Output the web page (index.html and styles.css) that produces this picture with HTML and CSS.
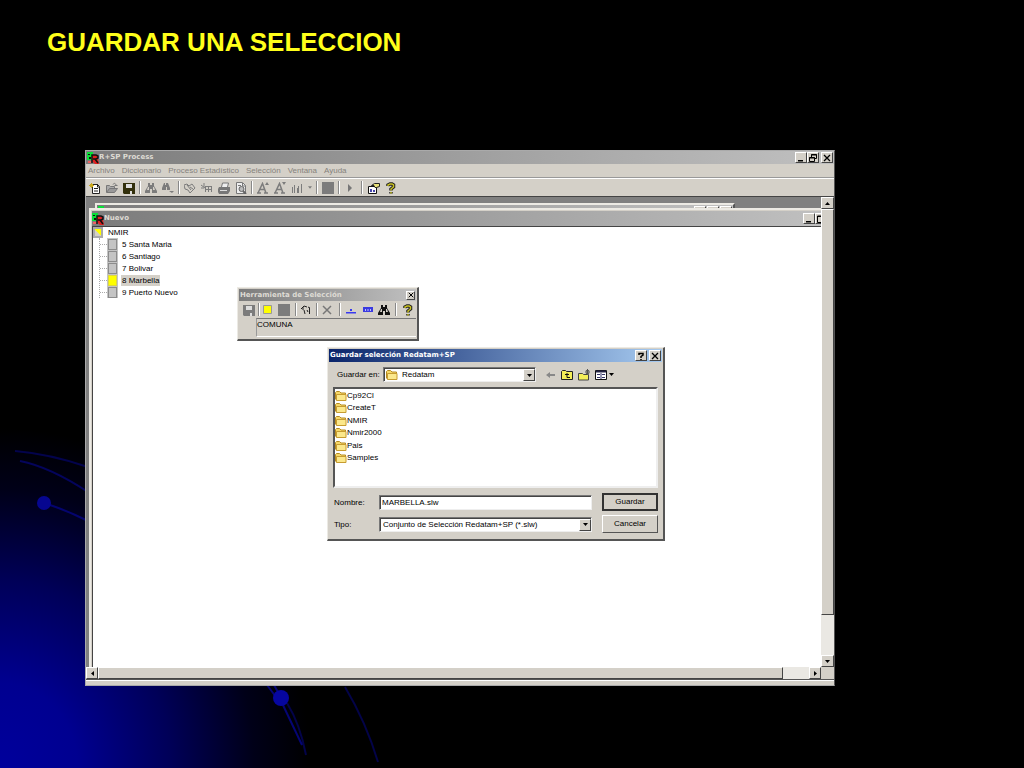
FILE: index.html
```html
<!DOCTYPE html>
<html lang="es">
<head>
<meta charset="utf-8">
<title>Guardar una selección</title>
<link rel="stylesheet" href="styles.css">
</head>
<body>
<svg width="0" height="0" class="defs" aria-hidden="true">
  <symbol id="app" viewBox="0 0 12 12"><path fill="#08e038" d="M0 0h6v8H0z"/><path fill="#e02020" d="M5 3h6v4l1 5H8L5 9z"/><path fill="none" stroke="#111" stroke-width="1.500" d="M5 11V3h4l2 1v2L9 7H6M8 7l3 4"/><path fill="#111" d="M1 2h2v1H1zM2 5h2v2H2z"/><path fill="#f06060" d="M1 9h3v2H1z"/></symbol>
  <symbol id="new" viewBox="0 0 12 12"><path fill="#fff" stroke="#222" d="M3.500 2.500h5l2 2v7h-7z"/><path fill="none" stroke="#222" d="M5 6.500h4M5 9h4M8.500 2v3h2"/><path stroke="#c8a820" d="M0 3.500h5M2.500 1v5M1 2l3 3M4 2L1 5"/></symbol>
  <symbol id="open" viewBox="0 0 12 12"><path fill="#aaa" stroke="#777" d="M.500 10V3.500h3l1 1h4V6"/><path fill="#999" stroke="#777" d="M.500 10.500l3-4h8l-3 4z"/><path fill="none" stroke="#777" d="M7 2.500c1-2 3-1 3 1M8.500 3.500h3"/></symbol>
  <symbol id="save" viewBox="0 0 12 12"><path fill="currentColor" d="M0 1h12v11H1l-1-1z"/><path fill="#ddd" d="M3 2h6v4H3zM7 9h2v3H7z"/></symbol>
  <symbol id="find" viewBox="0 0 12 12"><path fill="currentColor" d="M3 1h2v2h2V1h2v3l3 5v2H7V7H5v4H0V9l3-5z"/><path fill="#d4d0c8" d="M3 5h1v3H2zM8 5h1l1 3H8z"/></symbol>
  <symbol id="findnext" viewBox="0 0 12 12"><path fill="currentColor" d="M2 1h1v2h1V1h2l2 5v2H5V5H4v3H0V6zM7 9h5l-2 2z"/></symbol>
  <symbol id="dict" viewBox="0 0 12 12"><path fill="none" stroke="currentColor" d="M0 3l3-1 2 2 3-2 3 4-5 5-2-3-3-1zM3 3l4 5M6 5l3 2"/></symbol>
  <symbol id="tools" viewBox="0 0 12 12"><path fill="none" stroke="currentColor" d="M4 4.500h7M4 7.500h7M4.500 5v5M7.500 4v6M10.500 4v6M0 3l4 3M3 1v4M0 6h3"/></symbol>
  <symbol id="print" viewBox="0 0 12 12"><path fill="#eee" stroke="#777" d="M3.500 5l1-4h6L9.500 5"/><path fill="#777" d="M1 5h11v4l-2 3H1L0 10V7z"/><path stroke="#ddd" d="M2 8.500h7"/></symbol>
  <symbol id="preview" viewBox="0 0 12 12"><path fill="#eee" stroke="#777" d="M1.500.500h6l3 3v8h-9z"/><path fill="none" stroke="#777" d="M3 3.500h3M7.500 1v3h3"/><circle cx="6.500" cy="7" r="2.500" fill="#bbb" stroke="#666"/><path stroke="#666" stroke-width="2" d="M8 9l3 3"/></symbol>
  <symbol id="fontup" viewBox="0 0 12 12"><path fill="none" stroke="currentColor" stroke-width="1.500" d="M1 11L5.500 1.500 9 11M3 7.500h5M0 11h4M7 11h4"/><path fill="currentColor" d="M8 3h4l-2-3z"/></symbol>
  <symbol id="fontdown" viewBox="0 0 12 12"><path fill="none" stroke="currentColor" stroke-width="1.500" d="M1 11L5.500 1.500 9 11M3 7.500h5M0 11h4M7 11h4"/><path fill="currentColor" d="M8 0h4l-2 3z"/></symbol>
  <symbol id="chart" viewBox="0 0 12 12"><path stroke="currentColor" fill="none" d="M1.500 5v6M3.500 3v8M6.500 6v5M7.500 4v7M10.500 2v9"/></symbol>
  <symbol id="drop" viewBox="0 0 5 3"><path fill="currentColor" d="M0 0h5L2.500 3z"/></symbol>
  <symbol id="dropup" viewBox="0 0 5 3"><path fill="currentColor" d="M0 3h5L2.500 0z"/></symbol>
  <symbol id="block" viewBox="0 0 12 12"><path fill="#7c7c7c" d="M0 0h12v12H0z"/></symbol>
  <symbol id="play" viewBox="0 0 12 12"><path fill="#777" d="M4 2l4 4-4 4z"/></symbol>
  <symbol id="props" viewBox="0 0 12 12"><path fill="#fff" stroke="#111" d="M.500 4.500h8v7h-8z"/><path fill="#44a" d="M2 7h2v3H2zM5 8h2v2H5z"/><path fill="#e8e078" stroke="#222" d="M3.500 3.500l3-2h5v3l-3 1H7l-1-2z"/></symbol>
  <symbol id="help" viewBox="0 0 12 12"><path fill="none" stroke="#222" stroke-width="3.500" d="M3 4V3l2-1h2l1.500 1v2L6 7v1.500M6 10v1.500"/><path fill="none" stroke="#c8c020" stroke-width="1.500" d="M3 4V3l2-1h2l1.500 1v2L6 7v1.500M6 10v1.500"/></symbol>
  <symbol id="yellow" viewBox="0 0 12 12"><path fill="#ff0" stroke="#999" d="M1.500 1.500h8v8h-8z"/></symbol>
  <symbol id="invert" viewBox="0 0 12 12"><path fill="none" stroke="#222" d="M1 5l3-3 3 1M3 3v3M4 6l1 4M8 3l2 1M9.500 4v6M7 6l1 2"/></symbol>
  <symbol id="cross" viewBox="0 0 12 12"><path stroke="#777" stroke-width="1.500" d="M2 2l8 8M10 2l-8 8"/></symbol>
  <symbol id="level" viewBox="0 0 12 12"><path fill="#3a3af0" d="M5 5h2v2H5zM1 8h10v1.500H1z"/></symbol>
  <symbol id="cells" viewBox="0 0 12 12"><path fill="#3a3ae0" d="M1 3h10v5H1z"/><path fill="#bbf" d="M3 5h1v2H3zM5.500 5h1v2h-1zM8 5h1v2H8z"/></symbol>
  <symbol id="folder" viewBox="0 0 12 12"><path fill="#f6d868" stroke="#b58a20" d="M.500 9V2.500l1-1h3l1.500 1.500h4.500V10h-9z"/><path fill="#fbe88c" stroke="#c79c30" d="M1.500 4.500h9.500v6h-9.500z"/></symbol>
  <symbol id="back" viewBox="0 0 12 12"><path fill="#888" d="M2 6l4-3v2h5v2H6v2z"/></symbol>
  <symbol id="up" viewBox="0 0 12 12"><path fill="#f4ee58" stroke="#222" d="M.500 10.500v-8l1-1h3l1 1h6v8z"/><path fill="none" stroke="#111" d="M4 5.500h4M6 4v4.500h3"/></symbol>
  <symbol id="mkdir" viewBox="0 0 12 12"><path fill="#f4ee58" stroke="#444" d="M.500 11V4.500h4l1 1h5V11z"/><path stroke="#555" d="M7 3h5M9.500 0v6M8 1l3 4M11 1L8 5"/></symbol>
  <symbol id="view" viewBox="0 0 12 12"><path fill="#fff" stroke="#111" d="M.500 1.500h11v9H.500z"/><path stroke="#224" stroke-width="2" d="M1 2.500h10"/><path stroke="#336" d="M2 5.500h3M7 5.500h3M2 8.500h3M7 8.500h3M6 4v6"/></symbol>
  <symbol id="wmin" viewBox="0 0 8 8"><path fill="#000" d="M1 6h5v1.500H1z"/></symbol>
  <symbol id="wmax" viewBox="0 0 8 8"><path fill="none" stroke="#000" d="M.500 1h7v6.500h-7zM0 1.500h8"/></symbol>
  <symbol id="wres" viewBox="0 0 8 8"><path fill="none" stroke="#000" d="M2.500 3V.500h5v4H6M2 1h6M.500 3.500h5v4h-5zM0 4h6"/></symbol>
  <symbol id="wx" viewBox="0 0 8 8"><path stroke="#000" stroke-width="1.300" d="M1 1l6 6M7 1L1 7"/></symbol>
  <symbol id="wq" viewBox="0 0 8 8"><path fill="none" stroke="#000" stroke-width="1.500" d="M2 3V1.500h4V3L4 4.500V6M4 7v1"/></symbol>
</svg>

<svg class="trails" width="400" height="338" viewBox="0 430 400 338" aria-hidden="true">
  <g fill="none" stroke="#060690" stroke-width="2">
    <path opacity=".5" d="M15 451Q50 454 88 467"/>
    <path opacity=".6" d="M20 461Q50 467 88 492"/>
    <path opacity=".7" d="M50 505Q68 511 88 521"/>
    <path opacity=".8" d="M267 685l12 16M274 685l10 18M282 703L302 745"/>
    <path opacity=".5" d="M287 703Q300 724 306 755M345 687Q366 722 378 762"/>
  </g>
  <circle cx="44" cy="503" r="7" fill="#060690"/>
  <circle cx="281" cy="698" r="8" fill="#0606a0"/>
</svg>

<main class="slide">
  <h1>GUARDAR UNA SELECCION</h1>

  <section class="app">
    <header class="titlebar">
      <svg class="i12"><use href="#app"/></svg><span class="grow">R+SP Process</span>
      <button class="wbtn" aria-label="Minimizar"><svg><use href="#wmin"/></svg></button>
      <button class="wbtn" aria-label="Restaurar"><svg><use href="#wres"/></svg></button>
      <button class="wbtn apart" aria-label="Cerrar"><svg><use href="#wx"/></svg></button>
    </header>
    <nav class="menu">
      <a href="#">Archivo</a><a href="#">Diccionario</a><a href="#">Proceso Estadístico</a><a href="#">Selección</a><a href="#">Ventana</a><a href="#">Ayuda</a>
    </nav>
    <div class="toolbar">
      <button aria-label="Nuevo"><svg><use href="#new"/></svg></button>
      <button aria-label="Abrir"><svg><use href="#open"/></svg></button>
      <button class="olive" aria-label="Guardar"><svg><use href="#save"/></svg></button>
      <i class="sep"></i>
      <button aria-label="Buscar"><svg><use href="#find"/></svg></button>
      <button aria-label="Buscar siguiente"><svg><use href="#findnext"/></svg></button>
      <i class="sep"></i>
      <button aria-label="Diccionario"><svg><use href="#dict"/></svg></button>
      <button aria-label="Herramientas"><svg><use href="#tools"/></svg></button>
      <button aria-label="Imprimir"><svg><use href="#print"/></svg></button>
      <button aria-label="Vista previa"><svg><use href="#preview"/></svg></button>
      <i class="sep"></i>
      <button aria-label="Aumentar letra"><svg><use href="#fontup"/></svg></button>
      <button aria-label="Reducir letra"><svg><use href="#fontdown"/></svg></button>
      <button aria-label="Gráfico"><svg><use href="#chart"/></svg></button>
      <button class="narrow" aria-label="Tipos de gráfico"><svg class="tiny"><use href="#drop"/></svg></button>
      <i class="sep"></i>
      <button aria-label="Color"><svg><use href="#block"/></svg></button>
      <i class="sep"></i>
      <button aria-label="Ejecutar"><svg><use href="#play"/></svg></button>
      <i class="sep wide"></i>
      <button aria-label="Propiedades"><svg><use href="#props"/></svg></button>
      <button aria-label="Ayuda"><svg><use href="#help"/></svg></button>
    </div>

    <div class="workspace">
      <div class="viewport">
        <section class="child back">
          <header class="titlebar"><svg class="i12"><use href="#app"/></svg><span class="grow"></span>
            <i class="wbtn"></i><i class="wbtn"></i><i class="wbtn"></i></header>
        </section>
        <section class="child front">
          <header class="titlebar">
            <svg class="i12"><use href="#app"/></svg><span class="grow">Nuevo</span>
            <button class="wbtn" aria-label="Minimizar"><svg><use href="#wmin"/></svg></button>
            <button class="wbtn" aria-label="Maximizar"><svg><use href="#wmax"/></svg></button>
          </header>
          <div class="doc">
            <div class="root"><i class="half"></i>NMIR</div>
            <ul class="tree">
              <li><i class="cell"></i><span>5 Santa Maria</span></li>
              <li><i class="cell"></i><span>6 Santiago</span></li>
              <li><i class="cell"></i><span>7 Bolivar</span></li>
              <li><i class="cell on"></i><span class="sel">8 Marbella</span></li>
              <li><i class="cell"></i><span>9 Puerto Nuevo</span></li>
            </ul>
          </div>
        </section>
      </div>
      <div class="vscroll">
        <button aria-label="Subir"><svg class="tiny"><use href="#dropup"/></svg></button>
        <i class="thumb"></i>
        <button aria-label="Bajar"><svg class="tiny"><use href="#drop"/></svg></button>
      </div>
      <div class="hscroll">
        <button aria-label="Izquierda"><svg class="tiny left"><use href="#drop"/></svg></button>
        <i class="thumb"></i>
        <button aria-label="Derecha"><svg class="tiny right"><use href="#drop"/></svg></button>
      </div>
    </div>
    <footer class="status"></footer>

    <section class="palette">
      <header class="titlebar"><span class="grow">Herramienta de Selección</span>
        <button class="wbtn small" aria-label="Cerrar herramienta"><svg><use href="#wx"/></svg></button></header>
      <div class="ptools">
        <button class="grey" aria-label="Guardar selección"><svg><use href="#save"/></svg></button>
        <i class="sep tight"></i>
        <button aria-label="Seleccionar"><svg><use href="#yellow"/></svg></button>
        <button aria-label="Deseleccionar"><svg><use href="#block"/></svg></button>
        <i class="sep"></i>
        <button aria-label="Invertir"><svg><use href="#invert"/></svg></button>
        <i class="sep"></i>
        <button aria-label="Borrar"><svg><use href="#cross"/></svg></button>
        <i class="sep wide"></i>
        <button aria-label="Nivel"><svg><use href="#level"/></svg></button>
        <button aria-label="Elementos"><svg><use href="#cells"/></svg></button>
        <button class="dark" aria-label="Buscar elemento"><svg><use href="#find"/></svg></button>
        <i class="sep wide"></i>
        <button aria-label="Ayuda de selección"><svg><use href="#help"/></svg></button>
      </div>
      <div class="level">COMUNA</div>
    </section>

    <form class="dialog" role="dialog" aria-label="Guardar selección">
      <header class="titlebar blue"><span class="grow">Guardar selección Redatam+SP</span>
        <button type="button" class="wbtn" aria-label="Ayuda del diálogo"><svg><use href="#wq"/></svg></button>
        <button type="button" class="wbtn apart" aria-label="Cerrar diálogo"><svg><use href="#wx"/></svg></button></header>
      <div class="where">
        <label for="dir">Guardar en:</label>
        <div class="combo dir"><svg class="i12"><use href="#folder"/></svg>
          <select id="dir"><option>Redatam</option></select><i class="arrow"><svg class="tiny"><use href="#drop"/></svg></i></div>
        <div class="dtools">
          <button type="button" aria-label="Atrás"><svg><use href="#back"/></svg></button>
          <button type="button" aria-label="Subir un nivel"><svg><use href="#up"/></svg></button>
          <button type="button" aria-label="Nueva carpeta"><svg><use href="#mkdir"/></svg></button>
          <button type="button" aria-label="Ver"><svg><use href="#view"/></svg></button>
          <svg class="tiny"><use href="#drop"/></svg>
        </div>
      </div>
      <ul class="files">
        <li><svg class="i12"><use href="#folder"/></svg>Cp92Cl</li>
        <li><svg class="i12"><use href="#folder"/></svg>CreateT</li>
        <li><svg class="i12"><use href="#folder"/></svg>NMIR</li>
        <li><svg class="i12"><use href="#folder"/></svg>Nmir2000</li>
        <li><svg class="i12"><use href="#folder"/></svg>Pais</li>
        <li><svg class="i12"><use href="#folder"/></svg>Samples</li>
      </ul>
      <div class="fields">
        <label for="name">Nombre:</label>
        <input id="name" type="text" value="MARBELLA.slw">
        <button type="button" class="push default">Guardar</button>
        <label for="type">Tipo:</label>
        <div class="combo"><select id="type"><option>Conjunto de Selección Redatam+SP (*.slw)</option></select><i class="arrow"><svg class="tiny"><use href="#drop"/></svg></i></div>
        <button type="button" class="push">Cancelar</button>
      </div>
    </form>
  </section>
</main>
</body>
</html>
```
FILE: styles.css
```css
* { box-sizing: border-box; }
body {
  margin: 0;
  min-height: 100vh;
  position: relative;
  font: 8px/12px "Liberation Sans", Arial, sans-serif;
  color: #000;
  background: radial-gradient(ellipse 310px 340px at 0 100%, #00009c 0, #000090 25%, #000058 55%, #000018 82%, #000 100%) #000;
}
button, input, select { font: inherit; color: inherit; margin: 0; padding: 0; }
button { display: flex; align-items: center; justify-content: center; background: none; border: 0; }
svg { display: block; flex: none; }
ul { list-style: none; margin: 0; padding: 0; }
.defs { position: absolute; }
.trails { position: absolute; left: 0; bottom: 0; }
.slide { position: relative; padding: 26px 189px 82px 85px; }
h1 {
  margin: 0 0 92px -38px;
  font-size: 26px;
  line-height: 32px;
  font-weight: bold;
  color: #ffff1a;
  white-space: nowrap;
}
.i12 { width: 12px; height: 12px; }
.tiny { width: 5px; height: 3px; }
.grow { flex: 1; }

.app { position: relative; background: #d4d0c8; border: 1px solid #aaa; border-right-color: #555; }
.titlebar {
  display: flex;
  align-items: center;
  height: 13px;
  padding: 0 1px;
  color: #dedbd4;
  font: bold 7px/13px "DejaVu Sans", Verdana, sans-serif;
  background: linear-gradient(90deg, #7c7c7c, #c0c0c0);
  white-space: nowrap;
}
.blue { color: #fff; background: linear-gradient(90deg, #0a246a, #a6caf0); }
.wbtn {
  flex: none;
  width: 12px;
  height: 11px;
  background: #d4d0c8;
  border: 1px solid #fff;
  border-right-color: #444;
  border-bottom-color: #444;
}
.wbtn svg { width: 8px; height: 8px; }
.apart { margin-left: 2px; }
.small { width: 9px; height: 9px; }
.small svg { width: 6px; height: 6px; }

.menu { display: flex; gap: 7px; height: 14px; padding: 0 2px; border-bottom: 1px solid #999; }
.menu a { color: #85827c; text-decoration: none; line-height: 13px; }
.toolbar { display: flex; align-items: center; height: 18px; border-top: 1px solid #fff; color: #7c7c7c; }
.toolbar button { width: 17px; height: 16px; }
.toolbar button svg, .ptools svg, .dtools button svg { width: 12px; height: 12px; }
.toolbar .narrow { width: 9px; }
.toolbar .narrow svg { width: 4px; height: 3px; }
.toolbar .olive { color: #33300c; }
.sep { width: 1px; height: 13px; margin: 0 2px; background: #888; box-shadow: 1px 0 #fff; }
.wide { margin: 0 3px; }
.tight { margin: 0 1px; }

.workspace { display: grid; grid-template-columns: 1fr 13px; grid-template-rows: 1fr 12px; min-height: 483px; border-top: 1px solid #444; background: #d4d0c8; }
.viewport { position: relative; overflow: hidden; background: #808080; }
.child { position: absolute; background: #d4d0c8; border: 2px solid #eceae4; }
.back { left: 9px; top: 6px; width: 640px; height: 40px; border-right-color: #555; }
.back .wbtn { margin-left: 1px; }
.front { left: 3px; top: 11px; right: -8px; bottom: -4px; display: flex; flex-direction: column; padding: 1px 0 0 1px; }
.front .titlebar { height: 15px; padding: 0; }
.doc { flex: 1; background: #fff; border: 1px solid #444; border-bottom: 0; }
.root { display: flex; gap: 5px; height: 11px; line-height: 11px; }
.half { width: 10px; height: 11px; border: 2px solid #aaa; background: linear-gradient(45deg, #d4d0c8 45%, #ff0 50%); }
.tree { margin-left: 6px; border-left: 1px dotted #aaa; width: max-content; }
.tree li { display: flex; align-items: center; height: 12px; }
.tree li::before { content: ""; width: 7px; border-top: 1px dotted #aaa; }
.cell { width: 11px; height: 12px; padding: 1px 1px 2px; margin-right: 3px; background: #c4c4c4; }
.cell::before { content: ""; display: block; height: 9px; border: 1px solid #8c8c8c; }
.on::before { background: #ff0; border-color: #ddd840; }
.tree span { line-height: 11px; padding: 0 1px; }
.sel { background: #d4d0c8; }

.vscroll, .hscroll { display: flex; background: #eae8e3; }
.vscroll { flex-direction: column; }
.vscroll button, .hscroll button, .arrow, .thumb {
  background: #d4d0c8;
  border: 1px solid #fff;
  border-right-color: #444;
  border-bottom-color: #444;
}
.vscroll button { height: 12px; }
.hscroll button { width: 12px; }
.vscroll .thumb { flex: 1; margin-bottom: 40px; }
.hscroll .thumb { flex: 1; margin-right: 26px; }
.left { transform: rotate(90deg); }
.right { transform: rotate(-90deg); }
.status { height: 6px; border-top: 1px solid #555; box-shadow: inset 0 1px #fff; }

.palette, .dialog {
  position: absolute;
  background: #d4d0c8;
  border: 1px solid #eceae4;
  border-right: 2px solid #555;
  border-bottom: 2px solid #555;
  padding: 1px;
}
.palette { left: 151px; top: 136px; width: 182px; }
.palette .titlebar { height: 12px; }
.ptools { display: flex; align-items: center; height: 17px; padding-left: 3px; color: #7c7c7c; }
.ptools button { width: 17px; height: 16px; }
.ptools .grey { width: 15px; }
.ptools .dark { color: #111; }
.level { margin: 0 0 1px 17px; height: 19px; border-top: 1px solid #777; border-left: 1px solid #999; border-bottom: 1px solid #fff; line-height: 11px; }

.dialog { left: 241px; top: 196px; width: 338px; padding: 1px 1px 6px; }
.where { display: flex; align-items: center; padding: 5px 0 5px 8px; }
.where label { width: 46px; }
.combo { display: flex; align-items: center; height: 15px; background: #fff; border: 1px solid #777; border-right-color: #eee; border-bottom-color: #eee; box-shadow: inset 1px 1px #444; padding: 1px 0 0 2px; }
.combo select { flex: 1; min-width: 0; height: 12px; border: 0; background: none; appearance: none; padding-left: 1px; }
.dir { width: 153px; }
.dir select { padding-left: 4px; }
.arrow { width: 12px; height: 12px; display: flex; align-items: center; justify-content: center; }
.dtools { display: flex; align-items: center; padding-left: 5px; }
.dtools button { width: 17px; height: 14px; }
.files { display: flex; flex-direction: column; margin: 0 4px; height: 101px; padding: 1px 0 22px; justify-content: space-between; background: #fff; border: 2px solid #555; border-right-color: #eee; border-bottom-color: #eee; }
.files li { display: flex; line-height: 12px; }
.fields { display: grid; grid-template-columns: 45px 1fr 56px; gap: 4px 0; align-items: center; padding: 5px 4px 0 5px; }
.fields label { padding-top: 1px; }
.fields input { height: 15px; min-width: 0; border: 1px solid #777; border-right-color: #eee; border-bottom-color: #eee; box-shadow: inset 1px 1px #444; background: #fff; padding: 0 2px; }
.push { height: 18px; border: 1px solid #fff; border-right-color: #555; border-bottom-color: #555; background: #d4d0c8; }
.default { border: 2px solid #333; }
.fields input, .fields .combo { margin-right: 10px; }
```
